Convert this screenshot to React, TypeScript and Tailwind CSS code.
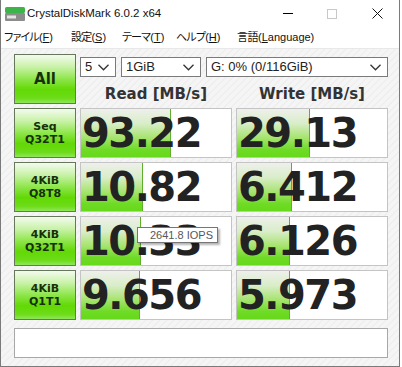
import React from "react";

type Row = {
  label: [string, string];
  read: string;
  readBar: number;
  write: string;
  writeBar: number;
};

const rows: Row[] = [
  { label: ["Seq", "Q32T1"], read: "93.22", readBar: 90, write: "29.13", writeBar: 73 },
  { label: ["4KiB", "Q8T8"], read: "10.82", readBar: 62, write: "6.412", writeBar: 55 },
  { label: ["4KiB", "Q32T1"], read: "10.33", readBar: 60, write: "6.126", writeBar: 53 },
  { label: ["4KiB", "Q1T1"], read: "9.656", readBar: 59, write: "5.973", writeBar: 53 },
];

const greenButton =
  "flex flex-col items-center justify-center border border-[#66775c] bg-[linear-gradient(to_bottom,#f3fbee_0%,#c9f2a8_25%,#8ee64a_50%,#62d905_72%,#6cdc18_90%,#8fe65a_100%)] text-[#17300c] font-['DejaVu_Sans',sans-serif] font-bold";

const barGradient =
  "linear-gradient(#5fae2c,#5fae2c), linear-gradient(to bottom, #eef0ec 0%, #d9edc9 30%, #a6e46e 60%, #6edb25 85%, #66d91a 100%)";

function ResultBox({ value, bar }: { value: string; bar: number }) {
  return (
    <div
      className="flex h-[50px] items-center border border-[#c4c4c4] bg-white bg-no-repeat pl-[1px]"
      style={{
        backgroundImage: barGradient,
        backgroundSize: `1px 100%, ${bar}px 100%`,
        backgroundPosition: `${bar - 1}px 0, 0 0`,
      }}
    >
      <span className="font-['DejaVu_Sans',sans-serif] text-[40px] font-bold leading-none tracking-[-1.5px] text-[#222]">
        {value}
      </span>
    </div>
  );
}

function Select({ value, width }: { value: string; width: string }) {
  return (
    <div
      className={`flex h-[20px] items-center justify-between border border-[#7a7a7a] bg-white pl-[4px] pr-[6px] font-['Liberation_Sans',sans-serif] text-[13px] text-[#222] ${width}`}
    >
      <span>{value}</span>
      <svg width="11" height="7" viewBox="0 0 11 7" fill="none">
        <polyline points="0.5,0.8 5.5,5.8 10.5,0.8" stroke="#333" strokeWidth="1.3" />
      </svg>
    </div>
  );
}

function MenuItem({ text, k, width }: { text: string; k: string; width: string }) {
  return (
    <span className={`${width} shrink-0 whitespace-nowrap`}>
      <span className="tracking-[-0.8px]">{text}</span>(<span className="underline">{k}</span>)
    </span>
  );
}

export default function App() {
  return (
    <div className="relative h-[367px] w-[400px] border-x border-b border-[#7a7a7a] bg-white">
      {/* title bar */}
      <div className="flex h-[27px] items-center">
        <svg className="ml-[4px]" width="20" height="14" viewBox="0 0 20 14">
          <rect x="0" y="0" width="20" height="6" rx="1.5" fill="#3cb44a" />
          <rect x="0" y="6" width="20" height="8" rx="1" fill="#8c8c8c" />
          <rect x="2" y="8.5" width="9" height="3" fill="#e4e4e4" />
        </svg>
        <span className="ml-[2px] font-['Liberation_Sans',sans-serif] text-[11.5px] text-[#111]">
          CrystalDiskMark 6.0.2 x64
        </span>
        <div className="flex-1" />
        <div className="flex h-full w-[44px] items-center justify-center">
          <div className="h-px w-[10px] bg-black" />
        </div>
        <div className="flex h-full w-[44px] items-center justify-center">
          <div className="h-[10px] w-[10px] border border-[#c8c8c8]" />
        </div>
        <div className="ml-[2px] flex h-full w-[43px] items-center justify-center">
          <svg width="11" height="11" viewBox="0 0 11 11">
            <path d="M0.5 0.5 L10.5 10.5 M10.5 0.5 L0.5 10.5" stroke="#111" strokeWidth="1" />
          </svg>
        </div>
      </div>

      {/* menu bar */}
      <div className="flex h-[21px] items-center pl-[3px] font-['Liberation_Sans','Noto_Sans_CJK_JP',sans-serif] text-[11px] text-[#111] [font-feature-settings:'palt']">
        <MenuItem text="ファイル" k="F" width="w-[67px]" />
        <MenuItem text="設定" k="S" width="w-[51px]" />
        <MenuItem text="テーマ" k="T" width="w-[54px]" />
        <MenuItem text="ヘルプ" k="H" width="w-[61px]" />
        <span className="whitespace-nowrap">
          <span className="tracking-[-0.5px]">言語</span>(<span className="underline">L</span>anguage)
        </span>
      </div>

      {/* content */}
      <div className="h-[318px] border-t border-[#e8e8e8] bg-[repeating-linear-gradient(135deg,#f5f5f5_0px,#f5f5f5_3px,#ececec_4px,#f5f5f5_5px)] pl-[13px] pt-[5px]">
        <div className="grid grid-cols-[62px_152px_152px] gap-x-[4px] gap-y-[4px]">
          <div className={`${greenButton} h-[50px] text-[15px]`}>All</div>
          <div className="col-span-2 flex h-[50px] flex-col pt-[3px]">
            <div className="flex gap-[5px]">
              <Select value="5" width="w-[36px]" />
              <Select value="1GiB" width="w-[80px]" />
              <Select value="G: 0% (0/116GiB)" width="w-[182px]" />
            </div>
            <div className="mt-[7px] flex h-[20px] font-['DejaVu_Sans',sans-serif] text-[15px] font-bold leading-[20px] text-[#333]">
              <span className="w-[152px] text-center">Read [MB/s]</span>
              <span className="ml-[4px] w-[152px] text-center">Write [MB/s]</span>
            </div>
          </div>

          {rows.map((r, i) => (
            <React.Fragment key={i}>
              <div className={`${greenButton} h-[50px] text-[11px] leading-[13px]`}>
                <span>{r.label[0]}</span>
                <span>{r.label[1]}</span>
              </div>
              <ResultBox value={r.read} bar={r.readBar} />
              <ResultBox value={r.write} bar={r.writeBar} />
            </React.Fragment>
          ))}
        </div>
        <div className="mt-[8px] h-[30px] w-[374px] border border-[#a8a8a8] bg-white" />
      </div>

      {/* tooltip */}
      <div className="absolute left-[136px] top-[227px] flex h-[16px] w-[81px] items-center border border-[#767676] bg-white pl-[12px] font-['Liberation_Sans',sans-serif] text-[11px] text-[#575757] shadow-[2px_2px_2px_rgba(0,0,0,0.3)]">
        2641.8 IOPS
      </div>
    </div>
  );
}
